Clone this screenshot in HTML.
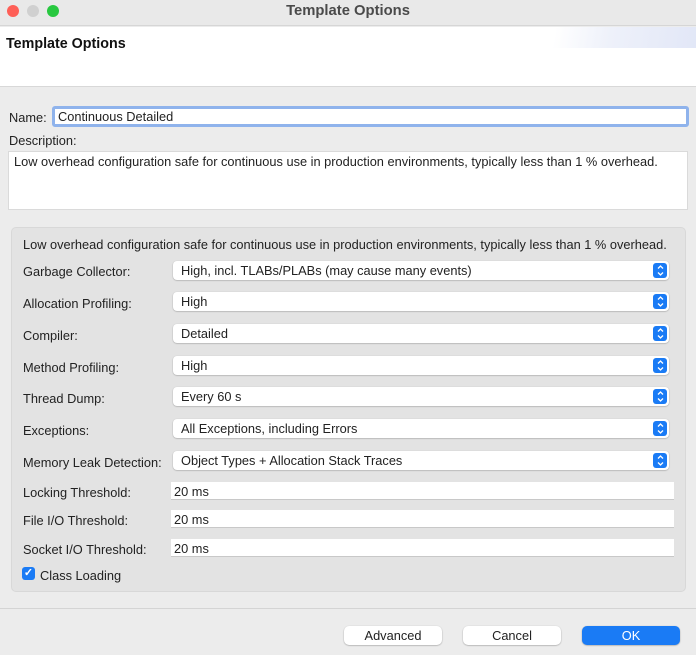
<!DOCTYPE html>
<html><head><style>
*{box-sizing:border-box;margin:0;padding:0}
body{width:696px;height:655px;background:#ececec;font-family:"Liberation Sans",sans-serif;font-size:12.8px;color:#222;position:relative;overflow:hidden}
.abs{position:absolute}
.tb{left:0;top:0;width:696px;height:26px;background:#e9e9e9;border-bottom:1px solid #d6d6d6;text-align:center;line-height:22px;font-size:14.8px;font-weight:bold;color:#4a4a4a}
.dot{top:5px;width:12px;height:12px;border-radius:50%}
.hdr{left:0;top:27px;width:696px;height:60px;background:#fff;border-bottom:1px solid #d8d8d8}
.lbl{font-size:12.8px;color:#222}
.sel{left:173px;width:496px;height:19px;background:#fff;border-radius:4px;box-shadow:0 0.5px 1.5px rgba(0,0,0,.3);padding-left:8px;line-height:20px;font-size:12.8px}
.arr{position:absolute;right:2px;top:2px;width:14px;height:15px;background:#1a7bf5;border-radius:3px}
.tf{left:171px;width:503px;height:18px;background:#fff;border-bottom:1px solid #c8c8c8;padding-left:3px;line-height:19px;font-size:12.8px}
.btn{top:626px;width:98px;height:19px;background:#fff;border-radius:5px;box-shadow:0 0.5px 1.5px rgba(0,0,0,.35);text-align:center;line-height:19px;font-size:12.8px}
</style></head><body>
<div class="abs tb">Template Options</div>
<div class="abs dot" style="left:7px;background:#fe5f57"></div>
<div class="abs dot" style="left:27px;background:#d0d0d0"></div>
<div class="abs dot" style="left:47px;background:#28c840"></div>
<div class="abs hdr">
<div class="abs" style="left:6px;top:9px;font-size:14.3px;font-weight:bold;color:#111">Template Options</div>
<div class="abs" style="left:540px;top:0;width:156px;height:21px;background:linear-gradient(100deg,rgba(255,255,255,0) 10%,#eef1fa 45%,#e2e7f7 100%);border-radius:140px 0 0 0"></div>
</div>
<div class="abs lbl" style="left:9px;top:110px">Name:</div>
<div class="abs" style="left:52px;top:106px;width:637px;height:21px;background:#fff;border:3px solid #8fb3ec;border-radius:3px;padding-left:3px;line-height:16px;font-size:12.8px">Continuous Detailed</div>
<div class="abs lbl" style="left:9px;top:133px">Description:</div>
<div class="abs" style="left:8px;top:151px;width:680px;height:59px;background:#fff;border:1px solid #dadada;padding:2px 5px;font-size:12.8px">Low overhead configuration safe for continuous use in production environments, typically less than 1 % overhead.</div>
<div class="abs" style="left:11px;top:227px;width:675px;height:365px;background:#e3e3e3;border:1px solid #d8d8d8;border-radius:5px"></div>
<div class="abs lbl" style="left:23px;top:237px">Low overhead configuration safe for continuous use in production environments, typically less than 1 % overhead.</div>

<div class="abs lbl" style="left:23px;top:264px">Garbage Collector:</div>
<div class="abs sel" style="top:261px">High, incl. TLABs/PLABs (may cause many events)<div class="arr"></div></div>
<div class="abs lbl" style="left:23px;top:296px">Allocation Profiling:</div>
<div class="abs sel" style="top:292px">High<div class="arr"></div></div>
<div class="abs lbl" style="left:23px;top:328px">Compiler:</div>
<div class="abs sel" style="top:324px">Detailed<div class="arr"></div></div>
<div class="abs lbl" style="left:23px;top:360px">Method Profiling:</div>
<div class="abs sel" style="top:356px">High<div class="arr"></div></div>
<div class="abs lbl" style="left:23px;top:391px">Thread Dump:</div>
<div class="abs sel" style="top:387px">Every 60 s<div class="arr"></div></div>
<div class="abs lbl" style="left:23px;top:423px">Exceptions:</div>
<div class="abs sel" style="top:419px">All Exceptions, including Errors<div class="arr"></div></div>
<div class="abs lbl" style="left:23px;top:455px">Memory Leak Detection:</div>
<div class="abs sel" style="top:451px">Object Types + Allocation Stack Traces<div class="arr"></div></div>

<div class="abs lbl" style="left:23px;top:485px">Locking Threshold:</div>
<div class="abs tf" style="top:482px">20 ms</div>
<div class="abs lbl" style="left:23px;top:513px">File I/O Threshold:</div>
<div class="abs tf" style="top:510px">20 ms</div>
<div class="abs lbl" style="left:23px;top:542px">Socket I/O Threshold:</div>
<div class="abs tf" style="top:539px">20 ms</div>
<div class="abs" style="left:22px;top:567px;width:13px;height:13px;background:#1a7bf5;border-radius:3px;color:#fff;font-size:11px;line-height:13px;text-align:center;font-weight:bold">✓</div>
<div class="abs lbl" style="left:40px;top:568px">Class Loading</div>

<div class="abs" style="left:0;top:608px;width:696px;height:1px;background:#d4d4d4"></div>
<div class="abs btn" style="left:344px">Advanced</div>
<div class="abs btn" style="left:463px">Cancel</div>
<div class="abs btn" style="left:582px;background:#1a7bf5;color:#fff">OK</div>
<svg class="abs" style="left:0;top:0" width="696" height="655">
<g fill="none" stroke="#fff" stroke-width="1.3">
<path d="M658 268.5l2.5-2.5 2.5 2.5M658 272.5l2.5 2.5 2.5-2.5"/>
<path d="M658 299.5l2.5-2.5 2.5 2.5M658 303.5l2.5 2.5 2.5-2.5"/>
<path d="M658 331.5l2.5-2.5 2.5 2.5M658 335.5l2.5 2.5 2.5-2.5"/>
<path d="M658 363.5l2.5-2.5 2.5 2.5M658 367.5l2.5 2.5 2.5-2.5"/>
<path d="M658 394.5l2.5-2.5 2.5 2.5M658 398.5l2.5 2.5 2.5-2.5"/>
<path d="M658 426.5l2.5-2.5 2.5 2.5M658 430.5l2.5 2.5 2.5-2.5"/>
<path d="M658 458.5l2.5-2.5 2.5 2.5M658 462.5l2.5 2.5 2.5-2.5"/>
</g></svg>
</body></html>
